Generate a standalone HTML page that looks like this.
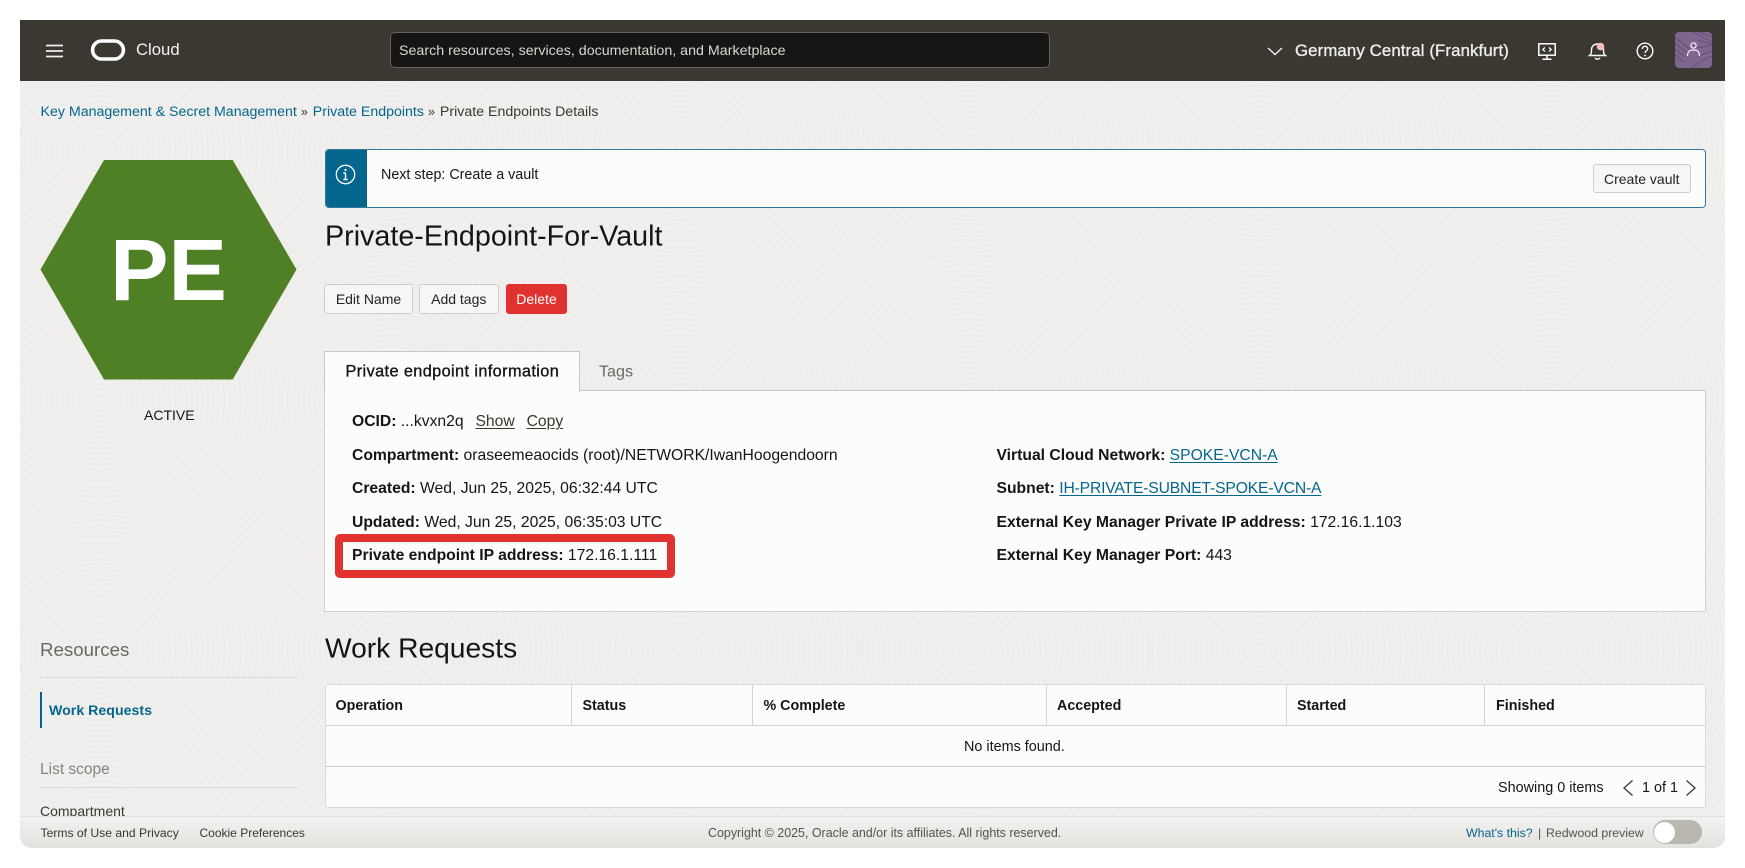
<!DOCTYPE html>
<html lang="en"><head><meta charset="utf-8"><title>Private Endpoints Details</title>
<style>
html,body{margin:0;padding:0;background:#fff}
body{width:1745px;height:868px;overflow:hidden;position:relative;font-family:"Liberation Sans",Arial,sans-serif;color:#161513}
.a{position:absolute;white-space:nowrap}
.c{transform:translateY(-50%)}
#app{position:absolute;left:20px;top:20px;width:1705px;height:828px;background:#f1f0ee;overflow:hidden;border-radius:0 0 12px 12px;box-shadow:inset 0 -1px 0 #d8d6d2}
#stage{position:absolute;left:-20px;top:-20px;width:1745px;height:868px}
#tex{position:absolute;left:20px;top:20px;width:1705px;height:828px;
background-image:repeating-radial-gradient(circle at 38% 56%,#edecea 0,#f2f1ef 2.7px,#edecea 5.4px);
background-size:290px 250px;background-position:-30px -10px}
.btn{position:absolute;box-sizing:border-box;border:1px solid #cfcdc8;border-radius:3px;background:#f7f6f4;font-size:14px;color:#222;text-align:center;line-height:28px}
.lnk{color:#04668c}
.b{font-weight:700}
.row{font-size:15.7px;color:#161513}
.u{text-decoration:underline;text-underline-offset:2px}
.th{font-size:14.3px;font-weight:700;color:#161513}
.vl{position:absolute;width:1px;top:685px;height:40px;background:#d6d4cf}
.foot{font-size:12.15px;color:#3b3731}
</style></head><body>
<div id="app"><div id="stage">
<div id="tex"></div>

<!-- header -->
<div class="a" style="left:20px;top:20px;width:1705px;height:61px;background:#3b3731"></div>
<svg class="a" style="left:46px;top:44px" width="18" height="14" stroke="#f1efed" stroke-width="1.8"><path d="M0 1.5H17M0 7H17M0 12.5H17"/></svg>
<svg class="a" style="left:90px;top:38px" width="36" height="24"><rect x="2.6" y="3" width="30.8" height="18" rx="9" fill="none" stroke="#fff" stroke-width="3.6"/></svg>
<div class="a c" style="left:136px;top:50px;font-size:16.7px;color:#f3f2f0">Cloud</div>
<div class="a" style="left:390px;top:32px;width:660px;height:36px;box-sizing:border-box;background:#161513;border:1px solid #66625c;border-radius:5px"></div>
<div class="a c" style="left:399px;top:51px;font-size:14.25px;color:#d9d7d3">Search resources, services, documentation, and Marketplace</div>
<svg class="a" style="left:1266px;top:45px" width="18" height="12" fill="none" stroke="#f1efed" stroke-width="1.4"><path d="M2 3l7 6.5L16 3"/></svg>
<div class="a c" style="left:1295px;top:51px;font-size:16.8px;color:#efeeec;letter-spacing:.12px;-webkit-text-stroke:.35px #efeeec">Germany Central (Frankfurt)</div>
<svg class="a" style="left:1537px;top:42px" width="20" height="19" fill="none" stroke="#fff" stroke-width="1.5"><rect x="1.8" y="1.8" width="16.4" height="11.4"/><path d="M10 13.2V17M5.5 17.3h9"/><path d="M8 5.5l-2.2 2 2.2 2M12 5.5l2.2 2-2.2 2" stroke-width="1.2"/></svg>
<svg class="a" style="left:1588px;top:42px" width="19" height="19" fill="none" stroke="#fff" stroke-width="1.4"><path d="M1.5 13.5c2-1.5 2-3 2-6 0-3 2.5-5.5 6-5.5s6 2.5 6 5.500c0 3 0 4.500 2 6z"/><path d="M7 16c1 1.500 3.500 1.500 5 0"/><circle cx="12.500" cy="4.600" r="3.800" fill="#f6bcb7" stroke="none"/></svg>
<svg class="a" style="left:1635px;top:41px" width="20" height="20" fill="none" stroke="#fff" stroke-width="1.4"><circle cx="10" cy="10" r="7.800"/><path d="M7.300 8c0-1.700 1.200-2.700 2.700-2.700s2.700 1 2.700 2.500c0 2.200-2.700 2-2.700 4.200"/><circle cx="10" cy="14.500" r=".9" fill="#fff" stroke="none"/></svg>
<svg class="a" style="left:1675px;top:32px" width="37" height="36"><rect width="37" height="36" rx="4" fill="#7e668e"/><g stroke="#5f4f6c" stroke-width=".9" fill="none"><path d="M0 5l16 13M0 11l12 10M0 17l10 8M0 23l9 7M18 0l19 10M24 0l13 5M22 8l15 4M22 16l15-3M24 24l13-5M24 30l13-6M16 36l8-5"/></g><g fill="none" stroke="#f4eff6" stroke-width="1.300"><circle cx="18.500" cy="13.500" r="2.600"/><path d="M12.500 24c0-5 2.500-6 6-6s6 1 6 6"/></g></svg>

<!-- breadcrumb -->
<div class="a c" style="left:40.500px;top:111.500px;font-size:14.200px;color:#3b3731"><span class="lnk">Key Management &amp; Secret Management</span><span style="margin:0 5px 0 4px;font-size:12.500px">»</span><span class="lnk">Private Endpoints</span><span style="margin:0 5px 0 4px;font-size:12.500px">»</span>Private Endpoints Details</div>

<!-- hexagon -->
<svg class="a" style="left:40px;top:160px" width="257" height="220"><polygon points="64,0 192.700,0 256.500,109.500 192.700,219.500 64,219.500 0.500,109.500" fill="#4f8025"/></svg>
<div class="a" style="left:40px;top:218.500px;width:257px;text-align:center;font-size:87.500px;line-height:102px;font-weight:700;color:#fff">PE</div>
<div class="a c" style="left:144px;top:415px;font-size:14px;color:#161513">ACTIVE</div>

<!-- left nav -->
<div class="a c" style="left:40px;top:650px;font-size:18.700px;color:#6a6762">Resources</div>
<div class="a" style="left:40px;top:677px;width:257px;height:1px;background:#d9d7d3"></div>
<div class="a" style="left:40px;top:692px;width:2px;height:36px;background:#04668c"></div>
<div class="a c b" style="left:49px;top:711px;font-size:14.200px;color:#04668c">Work Requests</div>
<div class="a c" style="left:40px;top:769.500px;font-size:15.500px;color:#85827d">List scope</div>
<div class="a" style="left:40px;top:787px;width:257px;height:1px;background:#dddbd7"></div>
<div class="a c" style="left:40px;top:811px;font-size:14px;color:#3b3731">Compartment</div>

<!-- alert -->
<div class="a" style="left:324.500px;top:149px;width:1381px;height:59px;box-sizing:border-box;background:#fcfcfb;border:1px solid #2f7a9c;border-radius:4px;overflow:hidden"><div style="position:absolute;left:0;top:0;width:41px;height:100%;background:#04668c"></div></div>
<svg class="a" style="left:335px;top:164px" width="21" height="21" fill="none" stroke="#fff"><circle cx="10.500" cy="10.500" r="9.200" stroke-width="1.300"/><path d="M10.500 9v6.500M8.300 9h2.200M8.300 15.500h4.400" stroke-width="1.400"/><circle cx="10.500" cy="6" r="1.100" fill="#fff" stroke="none"/></svg>
<div class="a c" style="left:381px;top:175px;font-size:14.300px;color:#161513">Next step: Create a vault</div>
<div class="btn" style="left:1592.500px;top:164px;width:98.500px;height:29px">Create vault</div>

<!-- title -->
<div class="a c" style="left:325px;top:236.500px;font-size:28.700px;color:#161513">Private-Endpoint-For-Vault</div>

<div class="btn" style="left:324px;top:284px;width:89px;height:30px">Edit Name</div>
<div class="btn" style="left:419px;top:284px;width:79.500px;height:30px">Add tags</div>
<div class="btn" style="left:506px;top:284px;width:61px;height:30px;background:#e0322e;border-color:#e0322e;color:#fff">Delete</div>

<!-- tabs / panel -->
<div class="a" style="left:324px;top:390px;width:1382px;height:222px;box-sizing:border-box;background:#fcfcfb;border:1px solid #d3d1cc;border-top-color:#c6c4bf"></div>
<div class="a" style="left:324px;top:351px;width:256px;height:41px;box-sizing:border-box;background:#fcfcfb;border:1px solid #c9c7c2;border-bottom:0"></div>
<div class="a c" style="left:345.500px;top:372px;font-size:16.300px;letter-spacing:.39px;-webkit-text-stroke:.35px #161513;color:#161513">Private endpoint information</div>
<div class="a c" style="left:599px;top:371.500px;font-size:16.100px;color:#6b6863">Tags</div>

<div class="a c row" style="left:352px;top:422px"><span class="b">OCID:</span> ...kvxn2q <span class="u" style="margin-left:7.500px;color:#3b3731">Show</span> <span class="u" style="margin-left:7.500px;color:#3b3731">Copy</span></div>
<div class="a c row" style="left:352px;top:456px"><span class="b">Compartment:</span> oraseemeaocids (root)/NETWORK/IwanHoogendoorn</div>
<div class="a c row" style="left:352px;top:489px"><span class="b">Created:</span> Wed, Jun 25, 2025, 06:32:44 UTC</div>
<div class="a c row" style="left:352px;top:522.500px"><span class="b">Updated:</span> Wed, Jun 25, 2025, 06:35:03 UTC</div>
<div class="a c row" style="left:352px;top:556px"><span class="b">Private endpoint IP address:</span> 172.16.1.111</div>
<div class="a" style="left:334.500px;top:534px;width:340px;height:44px;box-sizing:border-box;border:8px solid #e0322e;border-radius:5px"></div>

<div class="a c row" style="left:996.500px;top:456px"><span class="b">Virtual Cloud Network:</span> <span class="u lnk">SPOKE-VCN-A</span></div>
<div class="a c row" style="left:996.500px;top:489px"><span class="b">Subnet:</span> <span class="u lnk" style="letter-spacing:-.17px">IH-PRIVATE-SUBNET-SPOKE-VCN-A</span></div>
<div class="a c row" style="left:996.500px;top:522.500px"><span class="b">External Key Manager Private IP address:</span> 172.16.1.103</div>
<div class="a c row" style="left:996.500px;top:556px"><span class="b">External Key Manager Port:</span> 443</div>

<!-- work requests -->
<div class="a c" style="left:325px;top:648px;font-size:28.200px;color:#161513">Work Requests</div>
<div class="a" style="left:324.500px;top:684px;width:1381px;height:123.500px;box-sizing:border-box;background:#fcfcfb;border:1px solid #dcdad6;border-radius:3px"></div>
<div class="a" style="left:325px;top:725px;width:1380px;height:1px;background:#d6d4cf"></div>
<div class="a" style="left:325px;top:766px;width:1380px;height:1px;background:#cfcdc8"></div>
<div class="vl" style="left:571px"></div><div class="vl" style="left:752px"></div><div class="vl" style="left:1046px"></div><div class="vl" style="left:1286px"></div><div class="vl" style="left:1484px"></div>
<div class="a c th" style="left:335.500px;top:706px">Operation</div>
<div class="a c th" style="left:582.500px;top:706px">Status</div>
<div class="a c th" style="left:763.500px;top:706px">% Complete</div>
<div class="a c th" style="left:1057px;top:706px">Accepted</div>
<div class="a c th" style="left:1297px;top:706px">Started</div>
<div class="a c th" style="left:1496px;top:706px">Finished</div>
<div class="a c" style="left:964px;top:747px;font-size:14.400px;color:#161513">No items found.</div>
<div class="a c" style="left:1498px;top:788px;font-size:14.400px;color:#161513">Showing 0 items</div>
<svg class="a" style="left:1622px;top:779px" width="12" height="18" fill="none" stroke="#3b3731" stroke-width="1.300"><path d="M10.500 1.500L2 9l8.500 7.500"/></svg>
<div class="a c" style="left:1642px;top:788px;font-size:14.400px;color:#161513">1 of 1</div>
<svg class="a" style="left:1685px;top:779px" width="12" height="18" fill="none" stroke="#3b3731" stroke-width="1.300"><path d="M1.500 1.500L10 9l-8.500 7.500"/></svg>

<!-- footer -->
<div class="a" style="left:20px;top:816px;width:1705px;height:32px;background:linear-gradient(#f3f2f0,#e3e1de);border-top:1px solid #e2e0dc;box-sizing:border-box"></div>
<div class="a c foot" style="left:40.500px;top:833px">Terms of Use and Privacy</div>
<div class="a c foot" style="left:199.500px;top:833px;font-size:12px">Cookie Preferences</div>
<div class="a c foot" style="left:708px;top:833px;font-size:12.450px;color:#56524d">Copyright © 2025, Oracle and/or its affiliates. All rights reserved.</div>
<div class="a c foot" style="left:1466px;top:833px;font-size:12.300px;color:#04668c">What's this?</div>
<div class="a c foot" style="left:1538px;top:833px;color:#56524d">|</div>
<div class="a c foot" style="left:1546px;top:833px;font-size:12.300px;color:#56524d">Redwood preview</div>
<div class="a" style="left:1652.500px;top:820px;width:49px;height:24px;border-radius:12px;background:#b9b7b0"></div>
<div class="a" style="left:1654px;top:821.500px;width:21px;height:21px;border-radius:50%;background:#fff"></div>
</div></div>
</body></html>
